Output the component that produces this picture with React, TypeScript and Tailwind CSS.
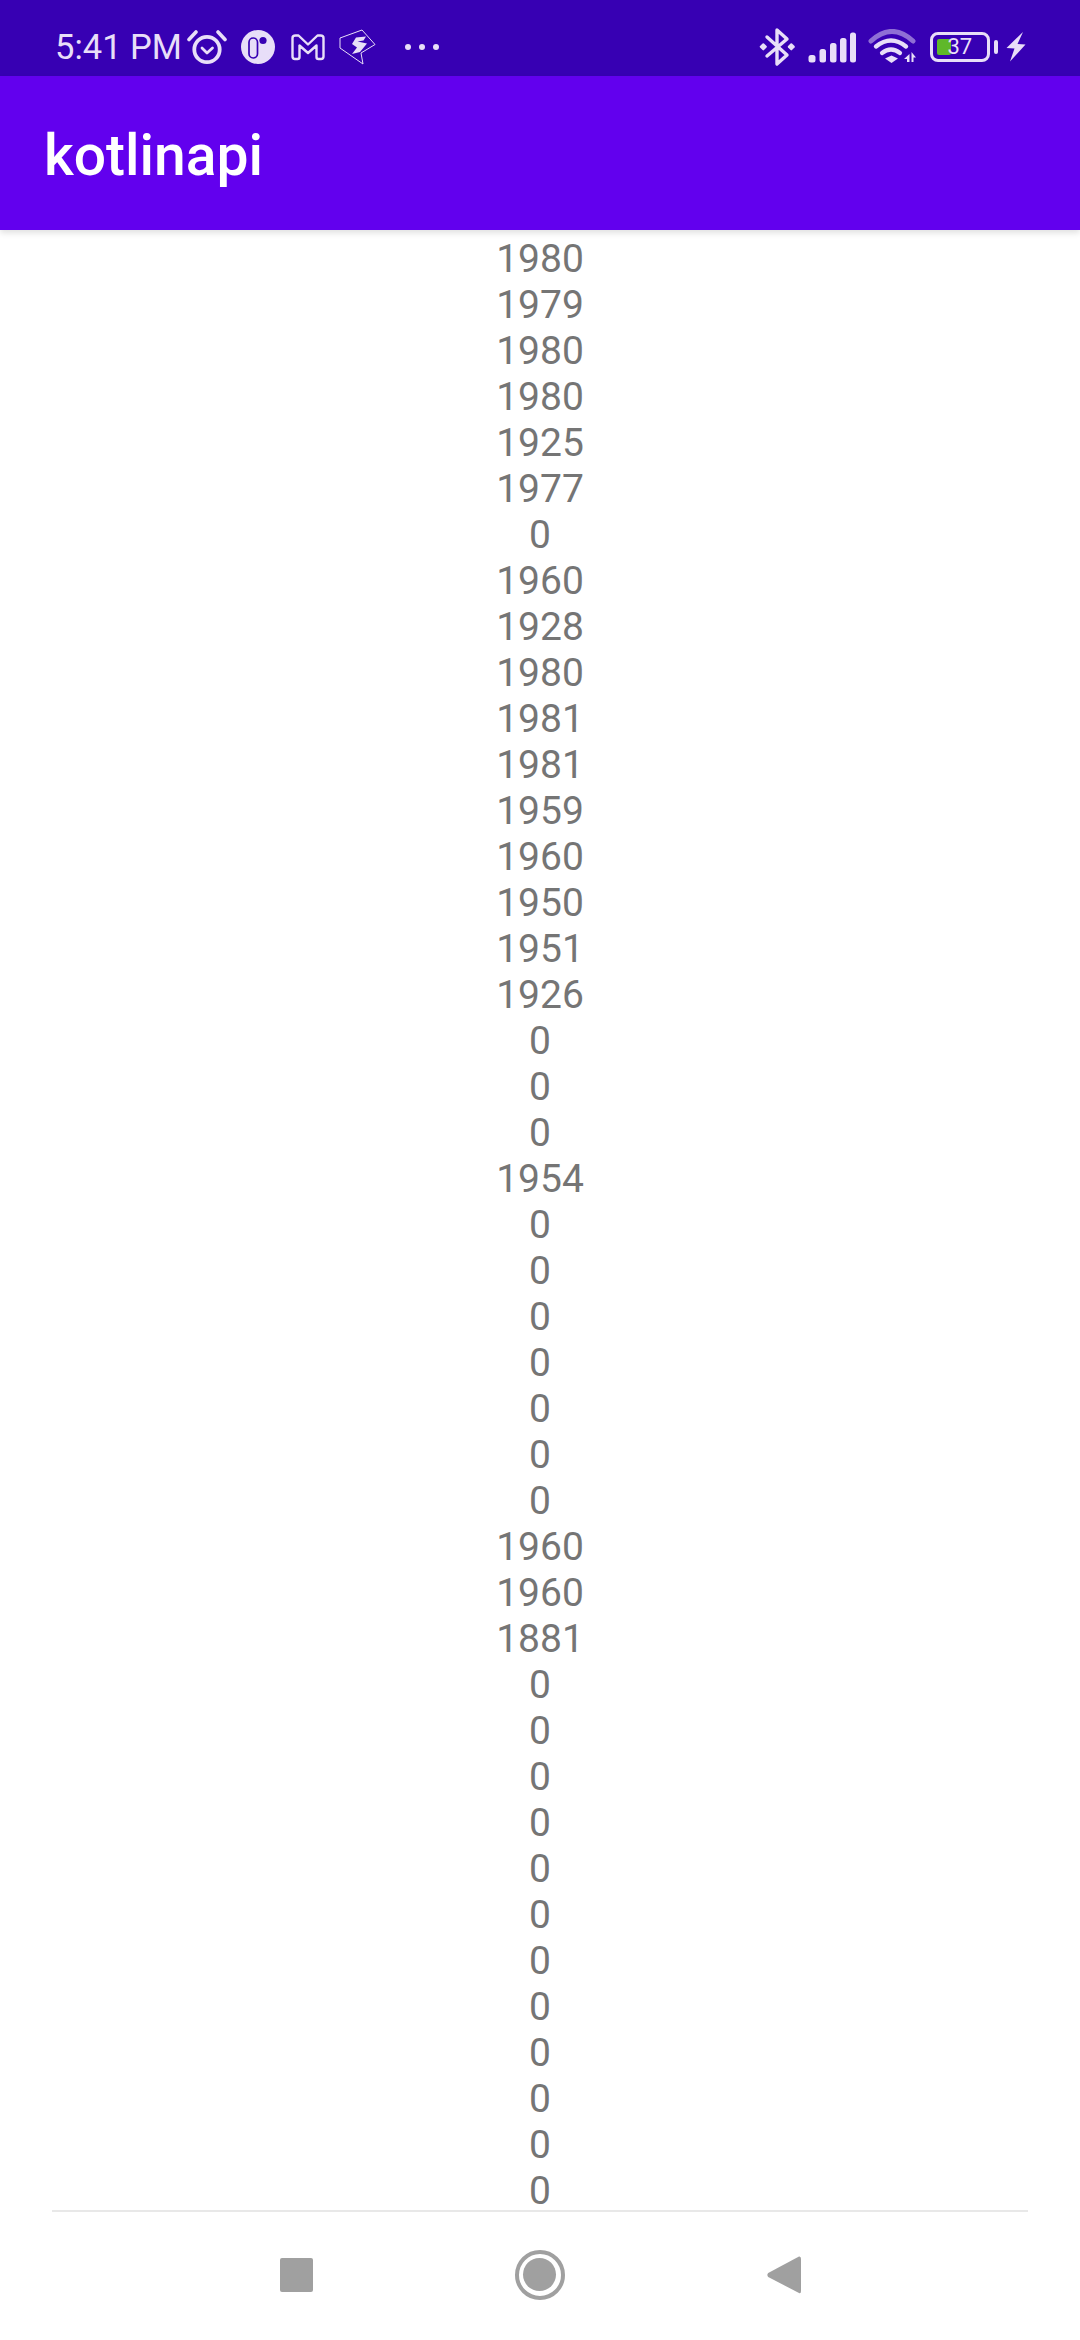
const years: string[] = [
  "1980","1979","1980","1980","1925","1977","0","1960","1928","1980","1981","1981","1959","1960","1950","1951","1926","0","0","0","1954","0","0","0","0","0","0","0","1960","1960","1881","0","0","0","0","0","0","0","0","0","0","0","0",
];

const ICON = "#e8def8";
const BAR = "#3700b3";

function Alarm() {
  return (
    <svg width="40" height="36" viewBox="188 28 40 36" className="ml-[5.5px]" fill="none" stroke={ICON} strokeLinecap="round" strokeLinejoin="round">
      <circle cx="208" cy="48.5" r="12.7" strokeWidth="3.8" />
      <path d="M190 38.5 L197 31 M219 31 L226 38.5" strokeWidth="3.6" />
      <path d="M203 47 L208 52 L213.5 47" strokeWidth="2.8" />
    </svg>
  );
}

function Disc() {
  return (
    <svg width="34" height="34" viewBox="242 30 34 34" className="ml-[14px]">
      <circle cx="259" cy="47" r="17" fill={ICON} />
      <rect x="250" y="38" width="8.5" height="20" rx="4.2" fill={ICON} stroke={BAR} strokeWidth="1.7" />
      <circle cx="264" cy="40.5" r="3.6" fill={BAR} />
    </svg>
  );
}

function MailM() {
  return (
    <svg width="34" height="27" viewBox="292 33 34 27" className="ml-[16px]" fill="none" stroke={ICON} strokeWidth="2.4" strokeLinejoin="round">
      <path d="M293.5 37 Q293.5 34.5 296.5 34.5 L299.5 34.5 L309 43.5 L318.5 34.5 L321.5 34.5 Q324.5 34.5 324.5 37 L324.5 55.5 Q324.5 58 322 58 L319.5 58 Q317.5 58 317.5 56 L317.5 44.5 L309 52 L300.5 44.5 L300.5 56 Q300.5 58 298.5 58 L296 58 Q293.5 58 293.5 55.5 Z" />
    </svg>
  );
}

function Shield() {
  return (
    <svg width="38" height="36" viewBox="340 29 38 36" className="ml-[14px]">
      <path d="M341 38 L363 30 L376 44.5 L362 53 L364 64 L341 48 Z" fill="none" stroke={ICON} strokeWidth="1" />
      <path d="M353 44 L357 37.5 L367 36.5 L364.5 40.5 L358.5 41.5 L368 43.5 L361 52 L353 54 L358 47.5 Z" fill={ICON} />
    </svg>
  );
}

function Bluetooth() {
  return (
    <svg width="37" height="40" viewBox="759 27 37 40" fill="none" stroke={ICON} strokeWidth="3.4" strokeLinejoin="round" strokeLinecap="round">
      <path d="M767 37 L787 55 L777 64 L777 30 L787 39 L767 56" />
      <rect x="760.5" y="44" width="5.6" height="5.6" rx="1" fill={ICON} stroke="none" transform="rotate(45 763.3 46.8)" />
      <rect x="788.5" y="44" width="5.6" height="5.6" rx="1" fill={ICON} stroke="none" transform="rotate(45 791.3 46.8)" />
    </svg>
  );
}

function Signal() {
  return (
    <svg width="48" height="31" viewBox="808 32 48 31" className="ml-[12px]" fill={ICON}>
      <rect x="808.5" y="55" width="7" height="7.5" rx="2.5" />
      <rect x="819.5" y="49" width="6.5" height="13.5" rx="2.5" />
      <rect x="830" y="43" width="6.5" height="19.5" rx="2.5" />
      <rect x="840" y="38" width="6.5" height="24.5" rx="2.5" />
      <rect x="850" y="32.5" width="6" height="30" rx="2.5" />
    </svg>
  );
}

function Wifi() {
  return (
    <svg width="48" height="36" viewBox="868 30 48 36" className="ml-[12px]" fill="none">
      <path d="M871 42 Q892 23 913 42" stroke={ICON} strokeOpacity="0.5" strokeWidth="5" strokeLinecap="round" />
      <path d="M876 47.5 Q891 35.5 906 47.5" stroke={ICON} strokeWidth="4.4" strokeLinecap="round" />
      <path d="M882 54 Q891 47 900 54" stroke={ICON} strokeWidth="4.2" strokeLinecap="round" />
      <path d="M885 59.5 L891.5 56.5 L898 59.5 L891.5 64 Z" fill={ICON} />
      <path d="M904 60 L909.5 55 L909.5 63 L907 63 L907 60 Z M911.5 53 L916 58.5 L913.5 58.5 L913.5 63 L911.5 63 Z" fill={ICON} />
    </svg>
  );
}

function Battery() {
  return (
    <div className="ml-[14px] flex items-center">
      <div className="w-[60px] h-[30px] rounded-[8px] border-[3.5px] border-[#e8def8] relative">
        <div className="absolute left-[3.5px] top-[3.5px] w-[14px] h-[16px] rounded-[2px] bg-[#5fb82a]" />
        <span className="absolute left-[14.5px] top-[-3px] leading-[30px] text-[22px] text-[#e8def8] font-['Roboto',sans-serif]">37</span>
      </div>
      <div className="ml-[4px] w-[4px] h-[14px] rounded-[2px] bg-[#e8def8]" />
    </div>
  );
}

function Bolt() {
  return (
    <svg width="20" height="30" viewBox="1006 33 20 30" className="ml-[8px]" fill={ICON}>
      <path d="M1023 33 L1006.5 49 L1014.5 49.5 L1010 62.5 L1025.5 45.5 L1017.5 45 Z" />
    </svg>
  );
}

export default function App() {
  return (
    <div className="w-[1080px] h-[2340px] bg-white flex flex-col overflow-hidden font-['Roboto',sans-serif]">
      <div className="h-[76px] shrink-0 bg-[#3700b3] flex items-center pt-[18px] pl-[55px] pr-[54px]">
        <span className="text-[34.5px] leading-none text-[#e8def8]">5:41 PM</span>
        <Alarm />
        <Disc />
        <MailM />
        <Shield />
        <div className="ml-[28px] flex gap-[8px]">
          <span className="w-[6px] h-[6px] rounded-full bg-[#e8def8]" />
          <span className="w-[6px] h-[6px] rounded-full bg-[#e8def8]" />
          <span className="w-[6px] h-[6px] rounded-full bg-[#e8def8]" />
        </div>
        <div className="ml-auto flex items-center">
          <Bluetooth />
          <Signal />
          <Wifi />
          <Battery />
          <Bolt />
        </div>
      </div>
      <div className="h-[154px] shrink-0 bg-[#6200ee] flex items-center pl-[44px] pt-[4px] shadow-[0_3px_6px_rgba(0,0,0,0.12)] z-10">
        <span className="text-[57px] leading-none font-medium text-white">kotlinapi</span>
      </div>
      <div className="flex-1 min-h-0 flex flex-col items-center gap-[6px] pt-[8px]">
        {years.map((y, i) => (
          <div key={i} className="h-[40px] leading-[40px] text-[39px] text-[#757575] shrink-0 translate-y-[1px]">
            {y}
          </div>
        ))}
      </div>
      <div className="h-[130px] shrink-0 relative flex items-center justify-center">
        <div className="absolute top-0 left-[52px] right-[52px] h-[2px] bg-[#e8e8e8]" />
        <div className="flex items-center gap-[202px] mt-[-1px]">
          <div className="w-[33px] h-[34px] rounded-[2px] bg-[#a0a0a0]" />
          <div className="w-[50px] h-[50px] rounded-full border-[4px] border-[#a0a0a0] flex items-center justify-center">
            <div className="w-[33px] h-[33px] rounded-full bg-[#a0a0a0]" />
          </div>
          <svg width="34" height="38" viewBox="0 0 34 38" fill="#a0a0a0">
            <path d="M32 0.5 Q34 0 34 3 L34 35 Q34 38 32 37 L1.2 21 Q-0.5 19 1.2 17 Z" />
          </svg>
        </div>
      </div>
    </div>
  );
}
